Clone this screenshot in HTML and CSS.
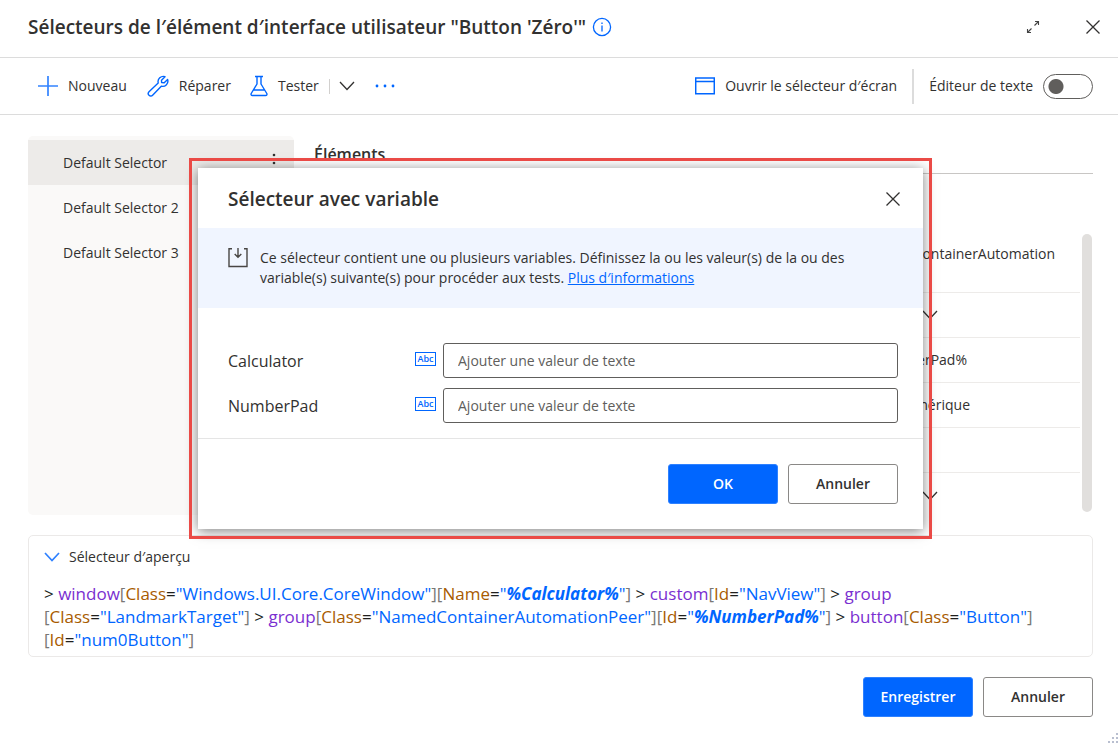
FILE: index.html
```html
<!DOCTYPE html>
<html lang="fr">
<head>
<meta charset="utf-8">
<title>Sélecteurs de l’élément d’interface utilisateur</title>
<link rel="stylesheet" href="styles.css">
</head>
<body>
<div class="window">
  <header class="titlebar">
    <h1 class="title">Sélecteurs de l′élément d′interface utilisateur "Button 'Zéro'"</h1>
    <button class="icon-btn" aria-label="Informations">
      <svg width="20" height="20" viewBox="0 0 20 20" fill="none" stroke="#0066ff" stroke-width="1.3"><circle cx="10" cy="10" r="8.6"/><path d="M10 8.500v6M10 5.500v1.500"/></svg>
    </button>
    <span class="spacer"></span>
    <button class="icon-btn expand" aria-label="Agrandir">
      <svg width="14" height="14" viewBox="0 0 14 14" fill="none" stroke="#444" stroke-width="1.1"><path d="M9 1.500h3.500V5M12.500 1.500L8.500 5.500M1.500 9v3.500H5M1.500 12.500L5.500 8.500"/></svg>
    </button>
    <button class="icon-btn" aria-label="Fermer">
      <svg width="14" height="14" viewBox="0 0 14 14" stroke="#323130" stroke-width="1.3"><path d="M.5 .5l13 13M13.500 .5L.5 13.500"/></svg>
    </button>
  </header>

  <div class="toolbar">
    <button class="tool">
      <svg width="20" height="20" viewBox="0 0 20 20" stroke="#3384ff" stroke-width="1.7"><path d="M10 0v20M0 10h20"/></svg>
      Nouveau</button>
    <button class="tool">
      <svg width="22" height="22" viewBox="0 0 22 22" fill="none" stroke="#0066ff" stroke-width="1.4" stroke-linejoin="round"><path d="M18 1.700A5.300 5.300 0 0 0 11.200 8L2 16.700a2.500 2.500 0 0 0 3.600 3.500L14.300 11.200A5.300 5.300 0 0 0 20.600 4.400L17.200 7.800L14.600 7.500L14.500 5.200Z"/></svg>
      Réparer</button>
    <button class="tool">
      <svg width="18" height="22" viewBox="0 0 18 22" fill="none" stroke="#0066ff" stroke-width="1.4" stroke-linejoin="round"><path d="M5 1.500h8M7 1.500V9L1.200 18.500Q.6 20.500 2.400 20.500h13.200Q17.400 20.500 16.800 18.500L11 9V1.500M3.500 15h11"/></svg>
      Tester</button>
    <button class="tool split" aria-label="Options de test">
      <svg width="16" height="10" viewBox="0 0 16 10" fill="none" stroke="#323130" stroke-width="1.3"><path d="M1 1l7 7.500L15 1"/></svg>
    </button>
    <button class="tool more" aria-label="Plus">
      <svg width="20" height="4" viewBox="0 0 20 4" fill="#0066ff"><circle cx="2" cy="2" r="1.400"/><circle cx="10" cy="2" r="1.400"/><circle cx="18" cy="2" r="1.400"/></svg>
    </button>
    <span class="spacer"></span>
    <button class="tool">
      <svg width="20" height="18" viewBox="0 0 20 18" fill="none" stroke="#0066ff" stroke-width="1.500"><path d="M.7 1h18.600v15.800H.7zM.7 4.500h18.600"/></svg>
      Ouvrir le sélecteur d′écran</button>
    <label class="editor-toggle">Éditeur de texte <input class="switch" type="checkbox" role="switch"></label>
  </div>

  <main class="content">
    <nav class="selectors">
      <button class="selector selected">Default Selector
        <svg width="4" height="20" viewBox="0 0 4 20" fill="#323130"><circle cx="2" cy="2" r="1.300"/><circle cx="2" cy="10" r="1.300"/><circle cx="2" cy="18" r="1.300"/></svg></button>
      <button class="selector">Default Selector 2</button>
      <button class="selector">Default Selector 3</button>
    </nav>
    <section class="elements">
      <h2 class="elements-title">Éléments</h2>
      <div class="elements-body">
        <div class="rows">
          <div class="row tall"><span>NamedContainerAutomation</span></div>
          <div class="row pick"><svg width="16" height="10" viewBox="0 0 16 10" fill="none" stroke="#323130" stroke-width="1.3"><path d="M1 1l7 7.500L15 1"/></svg></div>
          <div class="row pad">%NumberPad%</div>
          <div class="row num">Pavé numérique</div>
          <div class="row"></div>
          <div class="row pick last"><svg width="16" height="10" viewBox="0 0 16 10" fill="none" stroke="#323130" stroke-width="1.3"><path d="M1 1l7 7.500L15 1"/></svg></div>
        </div>
        <div class="scrollbar"></div>
      </div>
    </section>
  </main>

  <section class="preview">
    <button class="preview-head">
      <svg width="16" height="10" viewBox="0 0 16 10" fill="none" stroke="#2e81ff" stroke-width="1.700"><path d="M1 1l7 7.500L15 1"/></svg>
      Sélecteur d′aperçu</button>
    <code class="code">&gt; <span class="tag">window</span><i>[</i><b>Class</b>=<q>"Windows.UI.Core.CoreWindow"</q><i>][</i><b>Name</b>=<q>"<strong>%Calculator%</strong>"</q><i>]</i> &gt; <span class="tag">custom</span><i>[</i><b>Id</b>=<q>"NavView"</q><i>]</i> &gt; <span class="tag">group</span><br><i>[</i><b>Class</b>=<q>"LandmarkTarget"</q><i>]</i> &gt; <span class="tag">group</span><i>[</i><b>Class</b>=<q>"NamedContainerAutomationPeer"</q><i>][</i><b>Id</b>=<q>"<strong>%NumberPad%</strong>"</q><i>]</i> &gt; <span class="tag">button</span><i>[</i><b>Class</b>=<q>"Button"</q><i>]</i><br><i>[</i><b>Id</b>=<q>"num0Button"</q><i>]</i></code>
  </section>

  <footer class="actions">
    <button class="btn primary">Enregistrer</button>
    <button class="btn">Annuler</button>
  </footer>
  <svg class="grip" width="10" height="10" viewBox="0 0 10 10" fill="#b9bfd0"><path d="M8 0h2v2H8zM4 4h2v2H4zM8 4h2v2H8zM0 8h2v2H0zM4 8h2v2H4zM8 8h2v2H8z"/></svg>

  <div class="highlight">
    <div class="dialog" role="dialog" aria-labelledby="dialog-title">
      <div class="dialog-head">
        <h2 class="dialog-title" id="dialog-title">Sélecteur avec variable</h2>
        <button class="icon-btn" aria-label="Fermer">
          <svg width="14" height="14" viewBox="0 0 14 14" stroke="#323130" stroke-width="1.300"><path d="M.5 .5l13 13M13.500 .5L.5 13.500"/></svg>
        </button>
      </div>
      <div class="notice">
        <svg width="20" height="20" viewBox="0 0 20 20" fill="none" stroke="#484644" stroke-width="1.400"><path d="M4 .7H1V18.500h18V.7h-3M10 0v9M6.700 6l3.300 3.300L13.300 6"/></svg>
        <p class="notice-text">Ce sélecteur contient une ou plusieurs variables. Définissez la ou les valeur(s) de la ou des<br>variable(s) suivante(s) pour procéder aux tests. <a href="#">Plus d′informations</a></p>
      </div>
      <div class="fields">
        <div class="field">
          <label for="calc">Calculator</label><span class="abc">Abc</span>
          <input id="calc" type="text" placeholder="Ajouter une valeur de texte">
        </div>
        <div class="field">
          <label for="pad">NumberPad</label><span class="abc">Abc</span>
          <input id="pad" type="text" placeholder="Ajouter une valeur de texte">
        </div>
      </div>
      <div class="dialog-actions">
        <button class="btn primary">OK</button>
        <button class="btn">Annuler</button>
      </div>
    </div>
  </div>
</div>
</body>
</html>
```
FILE: styles.css
```css
* { box-sizing: border-box; }
body {
  margin: 0;
  background: #fff;
  color: #323130;
  font: 14px/20px "Open Sans", "Noto Sans", sans-serif;
}
button, input { font: inherit; color: inherit; }
button { background: none; border: 0; padding: 0; }
svg { flex: none; display: block; }
h1, h2, p { margin: 0; }

.window { position: relative; min-height: 100vh; display: flex; flex-direction: column; }
.spacer { flex: 1; }

.titlebar {
  display: flex; align-items: center;
  height: 58px; padding: 0 18px 4px 28px;
  border-bottom: 1px solid #dcdcdc;
}
.title { font-size: 19px; font-weight: 600; line-height: 24px; margin-right: 6px; }
.expand { margin-right: 46px; }

.toolbar {
  display: flex; align-items: center;
  height: 57px; padding: 0 25px 0 38px;
  border-bottom: 1px solid #dcdcdc;
}
.tool { display: flex; align-items: center; gap: 10px; margin-right: 20px; white-space: nowrap; }
.toolbar .tool:nth-of-type(2) { margin-right: 19px; }
.toolbar .tool:nth-of-type(3) { margin-right: 10px; }
.split { border-left: 1px solid #d2d0ce; height: 15px; padding-left: 9px; }
.toolbar .more { margin: 0; }
.spacer + .tool { margin-right: 15px; }
.editor-toggle {
  display: flex; align-items: center; gap: 10px;
  height: 35px; padding-left: 15px; border-left: 2px solid #dcdcdc;
}
.switch {
  appearance: none; margin: 0; width: 50px; height: 25px;
  border: 1px solid #605e5c; border-radius: 13px;
  background: radial-gradient(circle at 12px 50%, #605e5c 7px, transparent 8px);
}

.content { display: flex; gap: 20px; height: 379px; margin: 21px 25px 0 28px; }
.selectors { flex: 0 0 266px; background: #faf9f8; border-radius: 5px; padding-top: 4px; }
.selector {
  display: flex; align-items: center; justify-content: space-between;
  width: 100%; height: 45px; padding: 0 18px 0 35px;
}
.selected { background: #edebe9; }
.elements { flex: 1; min-width: 0; display: flex; flex-direction: column; }
.elements-title {
  height: 38px; padding-top: 6px; border-bottom: 1px solid #c8c6c4;
  font-size: 16px; font-weight: 600; line-height: 24px;
}
.elements-title { flex: none; }
.elements-body { display: flex; gap: 2px; margin: 60px 1px 0 0; }
.elements-title { height: 38px; }
.rows { flex: 1; }
.row {
  display: flex; align-items: center; justify-content: flex-end;
  height: 45px; border-bottom: 1px solid #edebe9;
}
.tall { height: 59px; align-items: flex-start; padding: 10px 25px 0 0; }
.pick { padding-right: 142px; }
.pad { padding-right: 113px; }
.num { padding-right: 110px; }
.last { border: 0; }
.scrollbar { width: 10px; height: 278px; border-radius: 5px; background: #e1dfdd; }
.elements-title { height: 38px; }

.preview {
  height: 122px; margin: 20px 25px 0 28px; padding: 11px 15px 0;
  border: 1px solid #ebe9e8; border-radius: 5px;
}
.preview-head { display: flex; align-items: center; gap: 9px; }
.code {
  display: block; margin-top: 15px; white-space: nowrap;
  font: 17px/23px "Open Sans", "Noto Sans", sans-serif; color: #201f1e;
}
.code i { font-style: normal; color: #797775; }
.code b { font-weight: 400; color: #a85b00; }
.code q { quotes: none; color: #0066ff; }
.code strong { font-weight: 700; font-style: italic; }
.tag { color: #7a2fd0; }

.actions { display: flex; justify-content: flex-end; gap: 10px; margin: 20px 25px 0; }
.btn {
  width: 110px; height: 40px; border: 1px solid #8a8886; border-radius: 3px;
  background: #fff; font-weight: 600;
}
.primary { background: #0066ff; border-color: #2e81ff; color: #fff; }
.grip { position: absolute; right: 0; bottom: 0; }

/* Modal dialog and its highlight frame, layered over the window */
.highlight { position: absolute; top: 158px; left: 189px; right: 186px; padding: 10px 9px; }
.highlight::after {
  content: ""; position: absolute; inset: 0;
  border: 3px solid #ea4a46; pointer-events: none;
}
.dialog { background: #fff; box-shadow: 0 2px 12px rgba(0, 0, 0, .5); }
.dialog-head {
  display: flex; align-items: center; justify-content: space-between;
  height: 60px; padding: 2px 23px 0 30px;
}
.dialog-title { font-size: 19px; font-weight: 600; line-height: 24px; }
.notice { display: flex; gap: 12px; height: 80px; padding: 20px 30px; background: #f0f5ff; }
.notice-text { white-space: nowrap; }
.notice a { color: #0066ff; }
.fields { padding: 35px 25px 15px 30px; display: grid; gap: 10px; border-bottom: 1px solid #e5e5e5; }
.field { display: flex; align-items: center; }
.field label { flex: 0 0 187px; font-size: 16px; }
.abc {
  width: 21px; height: 14px; margin: 0 7px 4px 0;
  border: 1px solid #0066ff; color: #0066ff;
  font-size: 9px; font-weight: 600; line-height: 12px; text-align: center;
}
.field input {
  flex: 1; min-width: 0; height: 35px; padding: 0 14px;
  border: 1px solid #605e5c; border-radius: 3px;
}
.field input::placeholder { color: #605e5c; opacity: 1; }
.dialog-actions { display: flex; justify-content: flex-end; gap: 10px; padding: 25px; }
```
